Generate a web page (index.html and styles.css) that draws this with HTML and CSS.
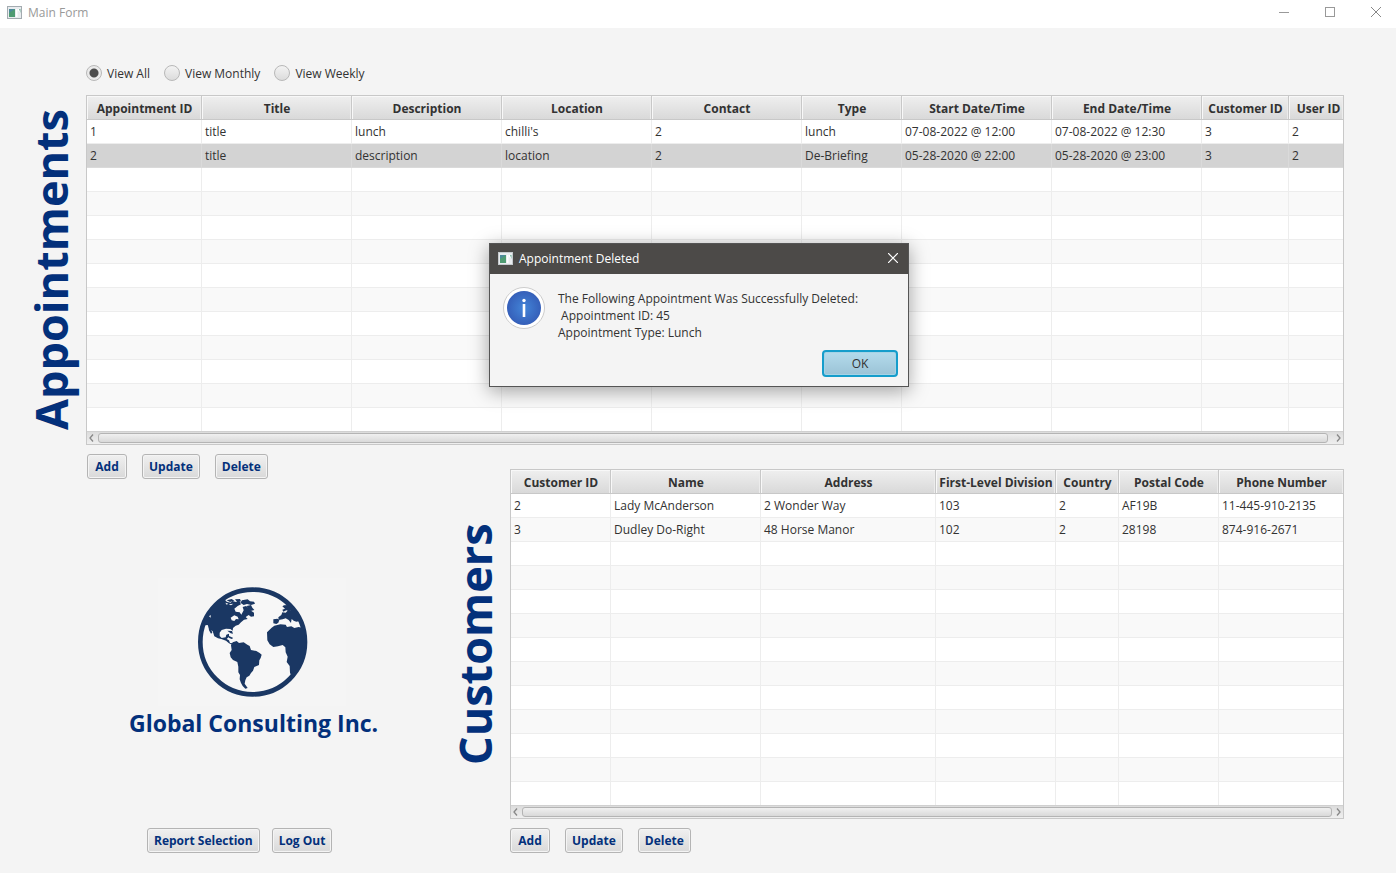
FILE: index.html
```
<!DOCTYPE html>
<html lang="en">
<head>
<meta charset="utf-8">
<title>Main Form</title>
<link rel="stylesheet" href="styles.css">
</head>
<body>
<div class="window">
  <header class="titlebar">
    <svg class="app-icon" width="15" height="13" viewBox="0 0 15 13"><rect x=".5" y=".5" width="14" height="12" fill="#e9ecef" stroke="#a3abb0"/><rect x="2" y="3" width="6" height="8" fill="#4c8a9a"/><path d="M2 11V7l6-4v8z" fill="#4f9b72"/><path d="M9 3h1.500v8H9zM11 3h2v3l-2-1z" fill="#fff"/><path d="M12 3h1.500v4z" fill="#72b09a"/></svg>
    <h1 class="window-title">Main Form</h1>
    <div class="window-controls">
      <button type="button" aria-label="Minimize"><svg width="10" height="10"><path d="M0 5.500h10" stroke="#999"/></svg></button>
      <button type="button" aria-label="Maximize"><svg width="10" height="10"><rect x=".5" y=".5" width="9" height="9" fill="none" stroke="#999"/></svg></button>
      <button type="button" aria-label="Close"><svg width="10" height="10"><path d="M0 0l10 10M10 0L0 10" stroke="#888"/></svg></button>
    </div>
  </header>

  <main class="content">
    <form class="filters">
      <label><input type="radio" name="view" checked>View All</label>
      <label><input type="radio" name="view">View Monthly</label>
      <label><input type="radio" name="view">View Weekly</label>
    </form>

    <section class="appointments">
      <h2 class="side-title">Appointments</h2>
      <div class="grid-frame">
        <table class="grid" id="appointment-table">
          <colgroup><col class="w115"><col class="w150"><col class="w150"><col class="w150"><col class="w150"><col class="w100"><col class="w150"><col class="w150"><col class="w87"><col></colgroup>
          <thead><tr><th>Appointment ID</th><th>Title</th><th>Description</th><th>Location</th><th>Contact</th><th>Type</th><th>Start Date/Time</th><th>End Date/Time</th><th>Customer ID</th><th class="tight">User ID</th></tr></thead>
          <tbody>
            <tr><td>1</td><td>title</td><td>lunch</td><td>chilli's</td><td>2</td><td>lunch</td><td>07-08-2022 @ 12:00</td><td>07-08-2022 @ 12:30</td><td>3</td><td>2</td></tr>
            <tr class="selected"><td>2</td><td>title</td><td>description</td><td>location</td><td>2</td><td>De-Briefing</td><td>05-28-2020 @ 22:00</td><td>05-28-2020 @ 23:00</td><td>3</td><td>2</td></tr>
          </tbody>
        </table>
        <div class="scrollbar">
          <button type="button" aria-label="Scroll left"><svg width="5" height="8"><path d="M4 .5L1 4l3 3.500" fill="none" stroke="#888" stroke-width="1.300"/></svg></button>
          <div class="thumb"></div>
          <button type="button" class="wide" aria-label="Scroll right"><svg width="5" height="8"><path d="M1 .5L4 4 1 7.500" fill="none" stroke="#888" stroke-width="1.300"/></svg></button>
        </div>
      </div>
    </section>

    <div class="lower">
      <section class="left-panel">
        <div class="actions">
          <button type="button" class="btn">Add</button>
          <button type="button" class="btn">Update</button>
          <button type="button" class="btn">Delete</button>
        </div>
        <div class="brand">
          <svg class="globe" viewBox="24 24 564 384" width="188" height="128" role="img" aria-label="Globe">
            <rect x="24" y="24" width="564" height="384" fill="#f5f5f5"/>
            <circle cx="308" cy="216" r="157" fill="#f7f7f7" stroke="#1a3763" stroke-width="14"/>
            <g fill="#1a3763">
              <path d="M163 150L180 119L202 97L222 86L230 95L242 98L247 93L258 96L268 93L273 103L263 108L253 116L257 125L269 127L274 134L281 121L278 111L288 108L297 115L303 122L312 128L312 139L303 140L296 135L287 141L293 147L282 149L273 157L266 164L257 167L249 174L248 182L241 177L228 176L215 180L209 188L209 198L215 204L227 202L229 194L237 191L237 200L230 207L237 211L240 219L252 220L246 224L237 220L228 212L214 207L204 205L193 199L188 184L178 176L173 165L164 166Z"/>
              <path d="M175 168L182 174L187 188L183 191L177 181ZM230 91L245 87L253 92L240 96ZM255 88L270 87L273 94L262 97ZM276 91L293 88L300 94L312 95L315 101L303 105L291 102L281 105L271 98ZM290 108L303 105L307 113L313 120L302 123L295 116ZM232 182L246 183L249 191L242 190ZM237 198L250 204L245 207L236 203Z"/>
              <path d="M248 217L260 213L267 219L281 217L292 224L299 228L303 240L319 243L329 249L335 254L332 264L328 271L327 285L313 291L309 302L303 309L298 317L290 322L286 331L284 341L293 354L286 356L278 348L273 339L269 328L270 315L265 307L265 290L262 276L249 270L242 262L239 249L245 240L243 226Z"/>
              <path d="M397 109L402 106L416 105L423 111L425 119L418 124L409 121L400 125L397 119L405 116ZM370 148L382 146L388 150L385 158L379 162L370 160ZM385 142L394 135L397 127L407 128L415 120L421 123L415 113L423 104L443 125L462 163L448 160L450 153L439 155L431 152L425 147L423 159L416 150L407 145L398 148L386 150ZM365 173L373 167L391 163L407 164L411 171L424 169L433 174L446 171L460 174L466 208L464 242L452 279L424 319L420 308L419 288L410 276L413 260L407 247L406 232L398 225L384 229L370 231L359 223L352 211L351 187Z"/>
            </g>
            <g fill="#f7f7f7"><path d="M242 143L253 136L263 140L266 148L258 147L253 153L245 151ZM236 103L250 101L243 106ZM226 98L235 101L230 104ZM177 139l5-4v8z"/><path d="M406 147l7 5 3 8-7-4zM426 150l5 5-2 5-4-3z"/></g>
          </svg>
          <p class="brand-name">Global Consulting Inc.</p>
        </div>
        <div class="actions session">
          <button type="button" class="btn">Report Selection</button>
          <button type="button" class="btn">Log Out</button>
        </div>
      </section>

      <section class="customers">
        <h2 class="side-title">Customers</h2>
        <div class="customer-data">
          <div class="grid-frame">
            <table class="grid" id="customer-table">
              <colgroup><col class="w100"><col class="w150"><col class="w175"><col class="w120"><col class="w63"><col class="w100"><col></colgroup>
              <thead><tr><th>Customer ID</th><th>Name</th><th>Address</th><th>First-Level Division</th><th>Country</th><th>Postal Code</th><th>Phone Number</th></tr></thead>
              <tbody>
                <tr><td>2</td><td>Lady McAnderson</td><td>2 Wonder Way</td><td>103</td><td>2</td><td>AF19B</td><td>11-445-910-2135</td></tr>
                <tr><td>3</td><td>Dudley Do-Right</td><td>48 Horse Manor</td><td>102</td><td>2</td><td>28198</td><td>874-916-2671</td></tr>
              </tbody>
            </table>
            <div class="scrollbar">
              <button type="button" aria-label="Scroll left"><svg width="5" height="8"><path d="M4 .5L1 4l3 3.500" fill="none" stroke="#888" stroke-width="1.300"/></svg></button>
              <div class="thumb"></div>
              <button type="button" aria-label="Scroll right"><svg width="5" height="8"><path d="M1 .5L4 4 1 7.500" fill="none" stroke="#888" stroke-width="1.300"/></svg></button>
            </div>
          </div>
          <div class="actions">
            <button type="button" class="btn">Add</button>
            <button type="button" class="btn">Update</button>
            <button type="button" class="btn">Delete</button>
          </div>
        </div>
      </section>
    </div>
  </main>

  <div class="dialog" role="dialog" aria-labelledby="dialog-title">
    <div class="dialog-bar">
      <svg class="app-icon" width="15" height="13" viewBox="0 0 15 13"><rect x=".5" y=".5" width="14" height="12" fill="#e9ecef" stroke="#c5cacd"/><rect x="2" y="3" width="6" height="8" fill="#4c8a9a"/><path d="M2 11V7l6-4v8z" fill="#4f9b72"/><path d="M9 3h1.500v8H9zM11 3h2v3l-2-1z" fill="#fff"/><path d="M12 3h1.500v4z" fill="#72b09a"/></svg>
      <h2 class="dialog-title" id="dialog-title">Appointment Deleted</h2>
      <button type="button" class="dialog-close" aria-label="Close"><svg width="10" height="10"><path d="M0 0l10 10M10 0L0 10" stroke="#fff" stroke-width="1.200"/></svg></button>
    </div>
    <div class="dialog-body">
      <svg width="42" height="42" viewBox="0 0 42 42">
        <defs><radialGradient id="info-fill"><stop offset="0" stop-color="#4385d8"/><stop offset="1" stop-color="#355fb9"/></radialGradient></defs>
        <circle cx="21" cy="21" r="20.500" fill="#fff" stroke="#ccc"/>
        <circle cx="21" cy="21" r="17" fill="url(#info-fill)"/>
        <circle cx="21" cy="13.500" r="1.700" fill="#fff"/><path d="M21 17v13" stroke="#fff" stroke-width="2.600"/>
      </svg>
      <p class="message">The Following Appointment Was Successfully Deleted:
 Appointment ID: 45
Appointment Type: Lunch</p>
    </div>
    <div class="dialog-actions"><button type="button" class="btn-default">OK</button></div>
  </div>
</div>
<script src="tables.js"></script>
</body>
</html>
```
FILE: styles.css
```
* { box-sizing: border-box; }
body {
  margin: 0;
  background: #f4f4f4;
  color: #323232;
  font: 12px/17px "Open Sans", "Noto Sans", sans-serif;
}
h1, h2, p { margin: 0; }
button { font: inherit; color: inherit; padding: 0; border: 0; background: none; }
svg { display: block; flex: none; }

.window { position: relative; min-height: 100vh; }
.titlebar {
  display: flex;
  align-items: center;
  height: 28px;
  padding: 0 15px 4px 7px;
  gap: 6px;
  background: #fff;
}
.window-title { font-size: 12px; font-weight: 400; color: #999; }
.window-controls { display: flex; gap: 36px; margin-left: auto; }
.window-controls button { width: 10px; height: 10px; }

.content { padding: 36px 52px 20px 0; }
.filters { display: flex; gap: 14px; height: 31px; padding-left: 86px; }
.filters label { display: flex; align-items: center; gap: 5px; height: 18px; }
.filters input {
  appearance: none;
  width: 16px;
  height: 16px;
  margin: 0;
  border: 1px solid #b8b8b8;
  border-radius: 50%;
  background: linear-gradient(#f3f3f3, #dcdcdc);
}
.filters input:checked { background: radial-gradient(circle, #4c4c4c 4px, #eaeaea 5px); }

.side-title {
  writing-mode: vertical-rl;
  transform: rotate(180deg);
  text-align: center;
  color: #03307b;
  font-size: 45px;
  line-height: 60px;
  font-weight: 700;
  white-space: nowrap;
}
.appointments { display: grid; grid-template-columns: 65px 1fr; padding-left: 21px; }

.grid-frame { min-width: 0; border: 1px solid #c8c8c8; background: #fff; }
.grid { width: 100%; table-layout: fixed; border-collapse: separate; border-spacing: 0; }
.grid th, .grid td { height: 24px; padding: 0; white-space: nowrap; }
.grid th {
  padding: 2px 0 0 1px;
  border-right: 1px solid #c8c8c8;
  border-bottom: 1px solid #c8c8c8;
  background: linear-gradient(#efefef, #d9d9d9);
  box-shadow: inset 1px 1px #f8f8f8, inset -1px 0 #ececec;
  font-weight: 700;
  text-align: center;
}
.grid th.tight { padding-left: 5px; }
.grid td { padding-left: 3px; border-right: 1px solid #ededed; border-bottom: 1px solid #ededed; }
.grid th:last-child, .grid td:last-child { border-right: 0; }
.grid tbody tr:nth-child(even) { background: #f9f9f9; }
.grid tbody tr.selected { background: #d3d3d3; }
.grid tbody tr.selected td { border-color: #dadada; }
.grid tbody tr:last-child td { height: 23px; border-bottom: 0; }
.w63 { width: 63px; }
.w87 { width: 87px; }
.w100 { width: 100px; }
.w115 { width: 115px; }
.w120 { width: 120px; }
.w150 { width: 150px; }
.w175 { width: 175px; }

.scrollbar {
  display: flex;
  align-items: center;
  height: 13px;
  padding-bottom: 1px;
  border-top: 1px solid #d0d0d0;
  background: linear-gradient(#dcdcdc, #efefef);
}
.scrollbar button { width: 11px; padding-left: 2px; }
.scrollbar button.wide { width: 15px; padding-left: 8px; }
.scrollbar button:last-child:not(.wide) { padding-left: 4px; }
.thumb {
  flex: 1;
  height: 10px;
  border: 1px solid #b4b4b4;
  border-radius: 3px;
  background: linear-gradient(#f0f0f0, #d9d9d9);
}

.lower { display: grid; grid-template-columns: 445px 1fr; }
.left-panel { display: flex; flex-direction: column; padding: 9px 0 0 87px; }
.actions { display: flex; gap: 15px; }
.btn {
  min-width: 40px;
  height: 25px;
  padding: 0 6px;
  border: 1px solid #b4b4b4;
  border-radius: 3px;
  background: linear-gradient(#f0f0f0, #d9d9d9);
  box-shadow: inset 0 0 0 1px #f4f4f4;
  color: #03307b;
  font-weight: 700;
}
.brand { align-self: flex-start; margin: 99px 0 0 42px; }
.globe { margin-left: 29px; }
.brand-name { color: #03307b; font-size: 23px; line-height: 34px; font-weight: 700; white-space: nowrap; }
.session { gap: 12px; margin-top: auto; padding-left: 60px; }
.customers { display: grid; grid-template-columns: 65px 1fr; padding-top: 24px; }
.customers > .side-title { height: 350px; }
.customer-data { min-width: 0; display: grid; gap: 9px; }

.dialog {
  position: absolute;
  top: 243px;
  left: 489px;
  width: 420px;
  border: 1px solid #555;
  background: #f4f4f4;
  box-shadow: 0 4px 18px rgba(0, 0, 0, .36);
}
.dialog-bar {
  display: flex;
  align-items: center;
  gap: 6px;
  height: 30px;
  padding: 0 10px 2px 8px;
  background: #4c4a48;
  color: #fff;
}
.dialog-title { font-size: 12px; font-weight: 400; }
.dialog-close { margin-left: auto; }
.dialog-body { display: flex; gap: 13px; padding: 13px 13px 9px; }
.message { padding-top: 3px; white-space: pre; }
.dialog-actions { display: flex; justify-content: flex-end; padding: 0 10px 9px; }
.btn-default {
  width: 76px;
  height: 27px;
  border: 2px solid #159dcb;
  border-radius: 4px;
  background: linear-gradient(#b4dbec, #9bc3d6);
  box-shadow: inset 0 0 0 1px #a5d3e6;
}
```
FILE: tables.js
```
// Fill each table with blank rows up to the visible row count.
document.querySelectorAll(".grid").forEach(function (table) {
  var body = table.tBodies[0];
  var columns = table.tHead.rows[0].cells.length;
  while (body.rows.length < 13) {
    var row = body.insertRow();
    for (var i = 0; i < columns; i++) row.insertCell();
  }
});
```
